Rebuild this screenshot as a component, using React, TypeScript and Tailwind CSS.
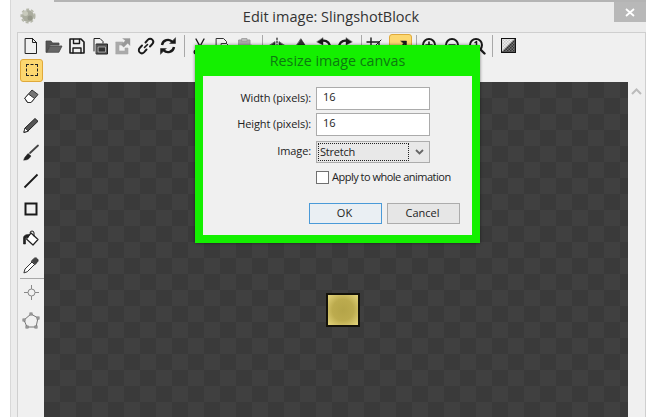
import React from "react";

const S = ({ children, w = 18, h = 18, vb = "0 0 18 18" }: { children: React.ReactNode; w?: number; h?: number; vb?: string }) => (
  <svg width={w} height={h} viewBox={vb} fill="none" stroke="#1a1a1a" strokeWidth="1.4" strokeLinejoin="round" strokeLinecap="round">
    {children}
  </svg>
);

const topIcons: { cls: string; el?: React.ReactNode; sep?: boolean; active?: boolean }[] = [
  { cls: "w-[22px]", el: <S><path d="M3.5 1.5h7l4 4v11h-11z" stroke="#222" strokeWidth="1" /><path d="M10.5 1.5v4h4" stroke="#222" strokeWidth="1" /></S> },
  { cls: "w-[24px]", el: <S><path d="M1 15V4h5l1.5 2H14v2H5L2 15z" fill="#555" stroke="#444" strokeWidth="0.8" /><path d="M2 15l3-6h12l-3 6z" fill="#666" stroke="#444" strokeWidth="0.8" /></S> },
  { cls: "w-[22px]", el: <S><path d="M2 2h11l3 3v11H2z" strokeWidth="1.6" /><path d="M5.5 2.5v4h6v-4M5 16v-5h8v5" strokeWidth="1.4" /></S> },
  { cls: "w-[24px]", el: <S><path d="M3 14V1.5h6l3 3V6" stroke="#222" strokeWidth="1" /><rect x="5.5" y="7" width="11" height="10" fill="#555" stroke="#222" strokeWidth="1" /><rect x="7.5" y="10" width="7" height="5" fill="#333" stroke="#ddd" strokeWidth="0.6" /></S> },
  { cls: "w-[22px]", el: <S><path d="M2 5h7v3H5v6h6v-3h3v6H2z" fill="#aaa" stroke="#aaa" strokeWidth="0.6" /><path d="M9 1.5h7v7l-2.3-2.3-4 4-2.4-2.4 4-4z" fill="#999" stroke="#999" strokeWidth="0.4" /></S> },
  { cls: "w-[24px]", el: <S><path d="M7.5 10.5l3-3" strokeWidth="1.6" /><path d="M8.5 5.5l2.5-2.8a3 3 0 0 1 4.3 4.3L13 9.5" strokeWidth="1.9" /><path d="M9.5 12.5l-2.5 2.8a3 3 0 0 1-4.3-4.3L5 8.5" strokeWidth="1.9" /></S> },
  { cls: "w-[20px]", el: <S><path d="M3 8a6 6 0 0 1 10.5-3" strokeWidth="2.4" strokeLinecap="butt" /><path d="M15 10a6 6 0 0 1-10.5 3" strokeWidth="2.4" strokeLinecap="butt" /><path d="M11 6.5h5.5V1z" fill="#1a1a1a" strokeWidth="0.5" /><path d="M7 11.5H1.5V17z" fill="#1a1a1a" strokeWidth="0.5" /></S> },
  { cls: "ml-[6px] mr-[4px]", sep: true },
  { cls: "w-[22px]", el: <S><path d="M5 2l6 11M13 2L7 13" /><circle cx="5" cy="15" r="1.8" /><circle cx="13" cy="15" r="1.8" /></S> },
  { cls: "w-[24px]", el: <S><path d="M2.5 1.5h7l3 3v10h-10z" stroke="#333" strokeWidth="1" /><path d="M7.5 6.5h5l3 3v7h-8z" fill="#eee" stroke="#333" strokeWidth="1" /></S> },
  { cls: "w-[20px]", el: <S><rect x="3" y="3" width="11" height="13" fill="#aaa" stroke="#999" strokeWidth="1" /><rect x="6" y="1.5" width="5" height="3" fill="#bbb" stroke="#999" strokeWidth="0.8" /><rect x="8" y="8" width="8" height="9" fill="#ccc" stroke="#aaa" strokeWidth="0.8" /></S> },
  { cls: "ml-[7px] mr-[2px]", sep: true },
  { cls: "w-[24px]", el: <S><path d="M9 1v16" strokeDasharray="1.6 1.6" strokeWidth="1.2" /><path d="M7 5v8L1 9z" fill="#333" strokeWidth="0.6" /><path d="M11 5v8l6-4z" fill="#333" strokeWidth="0.6" /></S> },
  { cls: "w-[24px]", el: <S><path d="M1 10h16" strokeDasharray="1.6 1.6" strokeWidth="1.2" /><path d="M5 8h8L9 2z" fill="#333" strokeWidth="0.6" /><path d="M5 12h8l-4 5z" fill="#333" strokeWidth="0.6" /></S> },
  { cls: "w-[20px]", el: <S><path d="M4 9a6 6 0 1 0 3-4.500" strokeWidth="2.2" strokeLinecap="butt" /><path d="M9 1v7L3 5z" fill="#1a1a1a" strokeWidth="0.4" /></S> },
  { cls: "w-[26px]", el: <S><path d="M14 9a6 6 0 1 1-3-4.500" strokeWidth="2.2" strokeLinecap="butt" /><path d="M9 1v7l6-3z" fill="#1a1a1a" strokeWidth="0.4" /></S> },
  { cls: "ml-[2px] mr-[1px]", sep: true },
  { cls: "w-[24px]", el: <S><path d="M5 1v12h12M1 5h12v12" strokeWidth="1.4" /><path d="M3 15L15 3" strokeWidth="1" /></S> },
  {
    cls: "ml-[2px] w-[23px]",
    active: true,
    el: <S><path d="M5 14l8-8" strokeWidth="1.7" /><path d="M9 4h5.500v5.500z" fill="#1a1a1a" strokeWidth="0.5" /><path d="M3 11v4.500h4.500z" fill="#1a1a1a" strokeWidth="0.5" /></S>,
  },
  { cls: "ml-[4px] mr-[1px]", sep: true },
  { cls: "w-[24px]", el: <S><circle cx="8" cy="8" r="6" strokeWidth="2" /><path d="M5 8h6M8 5v6" strokeWidth="1.6" /><path d="M12.500 12.500l4 4" strokeWidth="2.400" /></S> },
  { cls: "w-[22px]", el: <S><circle cx="8" cy="8" r="6" strokeWidth="2" /><path d="M5 8h6" strokeWidth="1.6" /><path d="M12.500 12.500l4 4" strokeWidth="2.400" /></S> },
  { cls: "w-[26px]", el: <S><circle cx="8" cy="8" r="6" strokeWidth="2" /><path d="M7 5.500l1.500-1v7" strokeWidth="1.5" /><path d="M12.500 12.500l4 4" strokeWidth="2.400" /></S> },
  { cls: "ml-[2px] mr-[7px]", sep: true },
  {
    cls: "w-[16px]",
    el: (
      <svg width="15" height="15" viewBox="0 0 15 15">
        <defs>
          <pattern id="chk" width="3" height="3" patternUnits="userSpaceOnUse">
            <rect width="3" height="3" fill="#777" />
            <rect width="1.500" height="1.500" fill="#333" />
            <rect x="1.500" y="1.500" width="1.500" height="1.500" fill="#333" />
          </pattern>
          <pattern id="chkl" width="3" height="3" patternUnits="userSpaceOnUse">
            <rect width="3" height="3" fill="#f0f0f0" />
            <rect width="1.500" height="1.500" fill="#c8c8c8" />
            <rect x="1.500" y="1.500" width="1.500" height="1.500" fill="#c8c8c8" />
          </pattern>
        </defs>
        <rect x="0.500" y="0.500" width="14" height="14" fill="url(#chk)" stroke="#111" />
        <path d="M1 1h12.500L1 13.500z" fill="url(#chkl)" />
      </svg>
    ),
  },
];

const leftIcons: { el: React.ReactNode; cls: string }[] = [
  { cls: "h-[29px] pb-[2px]", el: <S><path d="M3 11l7-8 6 4.500-7 8H6z" fill="#777" stroke="#333" strokeWidth="1" /><path d="M3 11l3.500-4 6 4.500L9 15.500H6z" fill="#fff" stroke="#333" strokeWidth="1" /></S> },
  { cls: "h-[28px]", el: <S><path d="M2 16l1-4L13 2.500l3 2.800L6 15z" fill="#555" stroke="#222" strokeWidth="1" /><path d="M2 16l1-4 3 3z" fill="#fff" stroke="#222" strokeWidth="0.8" /></S> },
  { cls: "h-[28px]", el: <S><path d="M8 9L16 1.500" strokeWidth="1.800" stroke="#444" /><path d="M2 16c0-2 1-3 2-4l2-2.500 3 2.500-2 2.500c-1.500 1.500-3.500 1.500-5 1.500z" fill="#222" strokeWidth="0.5" /></S> },
  { cls: "h-[28px]", el: <S><path d="M2.500 15.500L15.500 2.500" strokeWidth="1.800" strokeLinecap="butt" /></S> },
  { cls: "h-[28px]", el: <S><rect x="3.500" y="3.500" width="11" height="11" strokeWidth="2" strokeLinejoin="miter" /></S> },
  { cls: "h-[29px]", el: <S><path d="M9 4l7 6.500L11 16l-6.500-6z" fill="#fff" stroke="#222" strokeWidth="1.200" /><path d="M8 4a1.800 1.800 0 0 1 4 0v3" strokeWidth="1" /><path d="M8 5.500C4 5 1.500 6.500 1.500 9v6h2v-5c0-1 1-2 3-2" fill="#222" strokeWidth="0.6" /></S> },
  { cls: "h-[26px]", el: <S><path d="M2 16.500l1-3.500 7-7 2.500 2.500-7 7z" fill="#fff" stroke="#333" strokeWidth="1" /><path d="M9.500 5l2-2c1-1.500 3-1.500 4 0 1 1 .6 2.500-.5 3.500l-2 2z" fill="#444" stroke="#333" strokeWidth="1" /></S> },
];

const chev = (
  <svg width="9" height="6" viewBox="0 0 9 6" fill="none" stroke="#666" strokeWidth="1.800"><path d="M1 1l3.500 3.500L8 1" /></svg>
);

function Row({ label, children, className = "" }: { label: string; children: React.ReactNode; className?: string }) {
  return (
    <div className={`flex items-center ${className}`}>
      <span className="w-[113px] pb-[1px] pr-[5px] text-right text-[11px] tracking-[-0.1px] text-[#222]">{label}</span>
      {children}
    </div>
  );
}

export default function App() {
  return (
    <div className="relative h-[417px] w-[647px] overflow-hidden bg-white font-['Open_Sans','Noto_Sans',sans-serif]">
      <div className="ml-[10px] mr-[1px] flex h-[417px] flex-col border-l border-[#d8d8d8] bg-[#ececec]">
        <div className="ml-[43px] h-[2px] shrink-0 bg-[#b4b4b4]" />
        {/* Title bar */}
        <div className="relative flex h-[30px] shrink-0 items-center justify-center pl-[5px] text-[14.500px] text-[#333]">
          <svg className="absolute left-[9px] top-[6px]" width="16" height="16" viewBox="0 0 16 16" fill="none">
            <circle cx="8" cy="8" r="6" fill="#aaac9e" />
            <circle cx="8" cy="8" r="6.800" stroke="#b4b6a8" strokeWidth="1.500" strokeDasharray="3 2" />
            <circle cx="5.500" cy="5.500" r="2.500" fill="#c8cabc" />
            <circle cx="10" cy="10" r="2.500" fill="#96988a" />
          </svg>
          <span>Edit image: SlingshotBlock</span>
          <div className="absolute right-0 top-0 flex h-[20px] w-[32px] items-center justify-center bg-[#b8b8b8]">
            <svg width="10" height="9" viewBox="0 0 10 9" stroke="#fff" strokeWidth="1.800"><path d="M1 1l8 7M9 1L1 8" /></svg>
          </div>
        </div>
        {/* Client */}
        <div className="ml-[6px] flex min-h-0 flex-1 flex-col border-x border-t border-[#cfcfcf] bg-[#f0f0f0]">
          <div className="flex h-[25px] shrink-0 items-center pl-[2px]">
            {topIcons.map((t, i) =>
              t.sep ? (
                <div key={i} className={`h-[22px] w-px shrink-0 bg-[#a8a8a8] ${t.cls}`} />
              ) : (
                <div
                  key={i}
                  className={`flex h-[23px] shrink-0 items-center justify-center ${t.cls} ${t.active ? "rounded-[3px] border border-[#e0a93a] bg-[#fcd770]" : ""}`}
                >
                  {t.el}
                </div>
              ),
            )}
          </div>
          <div className="flex h-[24px] shrink-0 items-center pl-[2px]">
            <div className="flex h-[23px] w-[23px] items-center justify-center rounded-[3px] border border-[#e0a93a] bg-[#fcd770]">
              <div className="h-[12px] w-[12px] border border-dashed border-[#222]" />
            </div>
          </div>
          <div className="flex min-h-0 flex-1">
            <div className="flex w-[26px] shrink-0 flex-col items-center">
              {leftIcons.map((t, i) => (
                <div key={i} className={`flex w-full items-center justify-center ${t.cls}`}>
                  {t.el}
                </div>
              ))}
              <div className="ml-[1px] h-px w-[24px] bg-[#a8a8a8]" />
              <div className="flex h-[26px] items-center justify-center">
                <svg width="17" height="17" viewBox="0 0 17 17" fill="none" stroke="#888" strokeWidth="1">
                  <circle cx="8.500" cy="8.500" r="3.500" />
                  <path d="M8.500 1v4M8.500 12v4M1 8.500h4M12 8.500h4" />
                </svg>
              </div>
              <div className="flex h-[31px] items-center justify-center">
                <svg width="18" height="18" viewBox="0 0 18 18" fill="none" stroke="#777" strokeWidth="1">
                  <path d="M9 2l7 4-2 9H5L2 8z" />
                  <g fill="#eee">
                    <rect x="8" y="1" width="2" height="2" />
                    <rect x="15" y="5" width="2" height="2" />
                    <rect x="13" y="14" width="2" height="2" />
                    <rect x="4" y="14" width="2" height="2" />
                    <rect x="1" y="7" width="2" height="2" />
                  </g>
                </svg>
              </div>
            </div>
            <div className="relative flex min-w-0 flex-1 items-start justify-center bg-[#3c3c3c] bg-[conic-gradient(#404040_25%,#3a3a3a_0_50%,#404040_0_75%,#3a3a3a_0)] bg-[length:32px_32px]">
              <div className="ml-[13px] mt-[211px] h-[34px] w-[34px] border-2 border-[#14120a] bg-[radial-gradient(circle,#b4a448_0%,#bcab4e_50%,#e6d67e_100%)]" />
            </div>
            <div className="flex w-[17px] shrink-0 justify-center pt-[6px]">
              <svg width="11" height="7" viewBox="0 0 11 7" fill="none" stroke="#bbb" strokeWidth="2"><path d="M1 6l4.500-4.500L10 6" /></svg>
            </div>
          </div>
        </div>
      </div>

      {/* Dialog */}
      <div className="absolute left-[195px] top-[45px] flex h-[198px] w-[285px] flex-col bg-[#14f000] px-[8px] pb-[8px] shadow-[0_0_3px_rgba(0,0,0,0.5)]">
        <div className="flex h-[31px] shrink-0 items-center justify-center text-[14.300px] text-[#0c7a10]">Resize image canvas</div>
        <div className="flex flex-1 flex-col bg-[#f0f0f0] pt-[11px]">
          <Row label="Width (pixels):">
            <div className="flex h-[23px] w-[114px] items-center border border-[#ababab] bg-white pb-[2px] pl-[6px] text-[11px] text-[#222]">16</div>
          </Row>
          <Row label="Height (pixels):" className="mt-[3px]">
            <div className="flex h-[23px] w-[114px] items-center border border-[#ababab] bg-white pb-[2px] pl-[6px] text-[11px] text-[#222]">16</div>
          </Row>
          <Row label="Image:" className="mt-[5px]">
            <div className="flex h-[22px] w-[114px] items-center border border-[#acacac] bg-[#e8e8e8] pl-[1px]">
              <div className="flex h-[18px] w-[91px] items-center border border-dotted border-[#222] pl-[1px] text-[11px] tracking-[-0.2px] text-[#222]">Stretch</div>
              <div className="flex flex-1 justify-center">{chev}</div>
            </div>
          </Row>
          <div className="ml-[113px] mt-[6px] flex items-center">
            <div className="h-[13px] w-[13px] border border-[#707070] bg-white" />
            <span className="ml-[3px] pb-[1px] text-[11px] tracking-[-0.5px] text-[#222]">Apply to whole animation</span>
          </div>
          <div className="ml-[106px] mt-[16px] flex gap-[5px]">
            <div className="flex h-[21px] w-[73px] items-center justify-center border border-[#4a9ad8] bg-[#eaeff3] pr-[2px] text-[11px] text-[#222]">OK</div>
            <div className="flex h-[21px] w-[73px] items-center justify-center border border-[#acacac] bg-[#e6e6e6] pr-[2px] text-[11px] text-[#222]">Cancel</div>
          </div>
        </div>
      </div>
    </div>
  );
}
